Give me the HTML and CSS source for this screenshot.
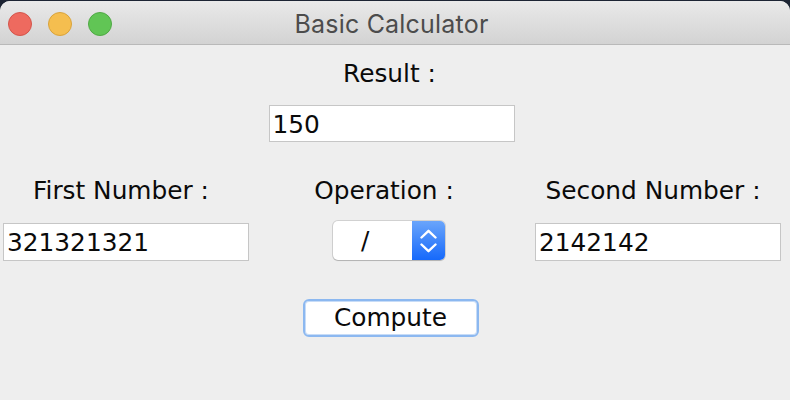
FILE: index.html
```html
<!DOCTYPE html>
<html lang="en">
<head>
<meta charset="utf-8">
<title>Basic Calculator</title>
<link rel="stylesheet" href="styles.css">
</head>
<body>
<div class="window">
  <div class="titlebar">
    <div class="lights">
      <span class="light light-red"></span>
      <span class="light light-yellow"></span>
      <span class="light light-green"></span>
    </div>
    <div class="title">Basic Calculator</div>
    <div class="titlebar-spacer"></div>
  </div>
  <div class="content">
    <div class="result-section">
      <div class="label">Result :</div>
      <div class="field result-field">150</div>
    </div>
    <div class="inputs">
      <div class="col col-first">
        <div class="label">First Number :</div>
        <div class="field">321321321</div>
      </div>
      <div class="col col-op">
        <div class="label">Operation :</div>
        <div class="combo">
          <span class="combo-value">/</span>
          <span class="combo-arrows">
            <svg width="17" height="24" viewBox="0 0 17 24" aria-hidden="true">
              <path d="M1.5 8.5 L8.5 1.8 L15.5 8.5" fill="none" stroke="#fff" stroke-width="2.4" stroke-linecap="round" stroke-linejoin="round"/>
              <path d="M1.5 15.5 L8.5 22.2 L15.5 15.5" fill="none" stroke="#fff" stroke-width="2.4" stroke-linecap="round" stroke-linejoin="round"/>
            </svg>
          </span>
        </div>
      </div>
      <div class="col col-second">
        <div class="label">Second Number :</div>
        <div class="field">2142142</div>
      </div>
    </div>
    <div class="actions">
      <button class="button" type="button">Compute</button>
    </div>
  </div>
</div>
</body>
</html>
```

FILE: styles.css
```css
html, body {
  margin: 0;
  padding: 0;
}
body {
  width: 790px;
  height: 400px;
  overflow: hidden;
  background: #1c2433;
}
.window {
  margin-top: 1px;
  height: 399px;
  background: #eeeeee;
  border-radius: 10px 10px 0 0;
  overflow: hidden;
  font-family: "DejaVu Sans", sans-serif;
  color: #0a0a0a;
}
.titlebar {
  height: 43px;
  border-bottom: 1px solid #b9b9b9;
  background: linear-gradient(#e9e9e9, #d3d3d3);
  display: grid;
  grid-template-columns: 1fr auto 1fr;
  align-items: center;
  padding-right: 7px;
}
.lights {
  display: flex;
  gap: 16px;
  padding-left: 8px;
  padding-top: 3px;
}
.light {
  width: 22px;
  height: 22px;
  border-radius: 50%;
  border: 1px solid;
}
.light-red { background: #ee6a5f; border-color: #d4554b; }
.light-yellow { background: #f5be4f; border-color: #d9a33b; }
.light-green { background: #61c555; border-color: #50a945; }
.title {
  font-family: "Inter", "Liberation Sans", sans-serif;
  font-size: 25px;
  color: #4c4c4c;
  padding-top: 2px;
  letter-spacing: 0.2px;
}
.content {
  display: flex;
  flex-direction: column;
}
.label {
  font-size: 24.8px;
  line-height: 28px;
  white-space: nowrap;
}
.field {
  box-sizing: border-box;
  width: 246px;
  height: 38px;
  background: #ffffff;
  border: 1px solid #c6c6c6;
  padding: 5px 3px 0;
  font-size: 24.8px;
  line-height: 28px;
}
.result-section {
  display: flex;
  flex-direction: column;
  align-items: center;
  padding-top: 15px;
  padding-right: 9px;
  gap: 17px;
}
.result-section .label {
  padding-right: 2px;
}
.result-field {
  height: 37px;
  margin-left: 2px;
}
.inputs {
  display: grid;
  grid-template-columns: 252px 274px 264px;
  margin-top: 35px;
}
.col {
  display: flex;
  flex-direction: column;
  align-items: center;
}
.col .label {
  padding-right: 10px;
  margin-bottom: 16px;
}
.col .field {
  margin-top: 2px;
}
.combo {
  box-sizing: border-box;
  width: 112px;
  height: 39px;
  display: flex;
  border-radius: 5px;
  background: #ffffff;
  box-shadow: 0 0 0 1px rgba(0, 0, 0, 0.12), 0 1px 1px rgba(0, 0, 0, 0.15);
  overflow: hidden;
}
.combo-value {
  flex: 1;
  font-size: 24.8px;
  line-height: 39px;
  padding-left: 28px;
}
.combo-arrows {
  width: 33px;
  display: flex;
  align-items: center;
  justify-content: center;
  background: linear-gradient(#6aa5fb, #1669fb);
}
.actions {
  display: flex;
  justify-content: center;
  padding-right: 9px;
  margin-top: 38px;
}
.button {
  box-sizing: border-box;
  width: 176px;
  height: 38px;
  padding: 0;
  border: 2px solid #8cb8f0;
  border-radius: 6px;
  background: #ffffff;
  box-shadow: inset 0 0 0 1px #c7dcf7;
  font-family: "DejaVu Sans", sans-serif;
  font-size: 24.8px;
  line-height: 28px;
  color: #0a0a0a;
}
```
